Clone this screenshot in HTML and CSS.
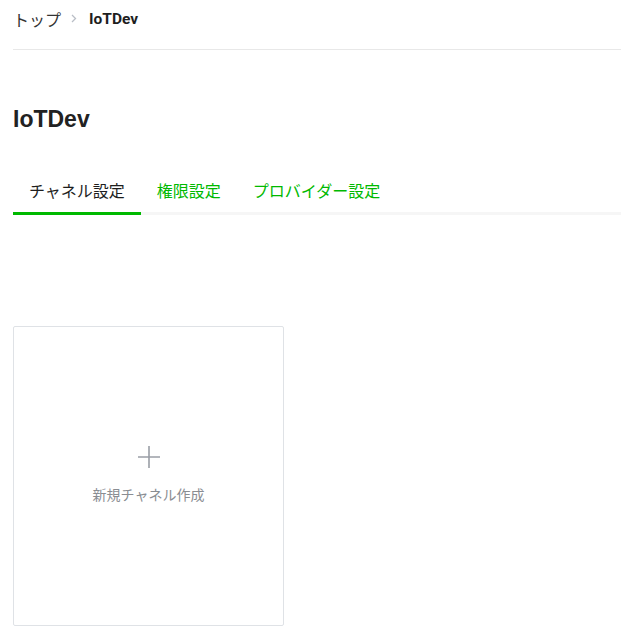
FILE: index.html
```html
<!DOCTYPE html>
<html lang="ja">
<head>
<meta charset="utf-8">
<title>IoTDev</title>
<link rel="stylesheet" href="styles.css">
</head>
<body>
<div class="page">
  <nav class="breadcrumb">
    <span class="crumb">トップ</span>
    <svg class="chev" width="6" height="9" viewBox="0 0 6 9"><path d="M1 1l3.5 3.5L1 8" fill="none" stroke="#b9bec6" stroke-width="1.3"/></svg>
    <span class="crumb current">IoTDev</span>
  </nav>
  <h1 class="title">IoTDev</h1>
  <div class="tabs">
    <a class="tab active">チャネル設定</a>
    <a class="tab">権限設定</a>
    <a class="tab">プロバイダー設定</a>
  </div>
  <div class="cards">
    <div class="card-new">
      <svg class="plus" width="24" height="24" viewBox="0 0 24 24"><path d="M12 1v22M1 12h22" stroke="#9a9ea6" stroke-width="1.6" fill="none"/></svg>
      <span class="card-label">新規チャネル作成</span>
    </div>
  </div>
</div>
</body>
</html>
```
FILE: styles.css
```css
html, body {
  margin: 0;
  padding: 0;
  background: #fff;
}
body {
  font-family: "Noto Sans CJK JP", "Noto Sans", sans-serif;
  color: #1e1e1e;
}
.page {
  padding-left: 13px;
}
.breadcrumb {
  display: flex;
  align-items: center;
  height: 50px;
  box-sizing: border-box;
  padding-bottom: 12px;
  border-bottom: 1px solid #e8e8e8;
  font-size: 16px;
  line-height: 22px;
}
.crumb {
  color: #333;
}
.chev {
  margin: 0 12px 0 10px;
}
.crumb.current {
  font-family: Roboto, "Noto Sans", sans-serif;
  font-weight: 700;
  font-size: 15.5px;
  color: #1e1e1e;
}
.title {
  margin: 53px 0 0;
  font-family: "Liberation Sans", Arial, sans-serif;
  font-weight: 700;
  font-size: 23px;
  line-height: 32px;
  color: #222;
}
.tabs {
  display: flex;
  margin-top: 43px;
  border-bottom: 3px solid #f6f6f6;
}
.tab {
  display: block;
  padding: 0 16px;
  font-size: 16px;
  line-height: 24px;
  padding-bottom: 10px;
  color: #00b900;
  margin-bottom: -3px;
  border-bottom: 3px solid transparent;
}
.tab.active {
  color: #1e1e1e;
  border-bottom-color: #00b900;
}
.cards {
  margin-top: 111px;
  display: flex;
}
.card-new {
  width: 271px;
  height: 300px;
  box-sizing: border-box;
  padding-bottom: 4px;
  border: 1px solid #dfe2e6;
  border-radius: 2px;
  display: flex;
  flex-direction: column;
  align-items: center;
  justify-content: center;
}
.card-label {
  margin-top: 15px;
  font-size: 14px;
  line-height: 20px;
  color: #8a8d92;
}
```
